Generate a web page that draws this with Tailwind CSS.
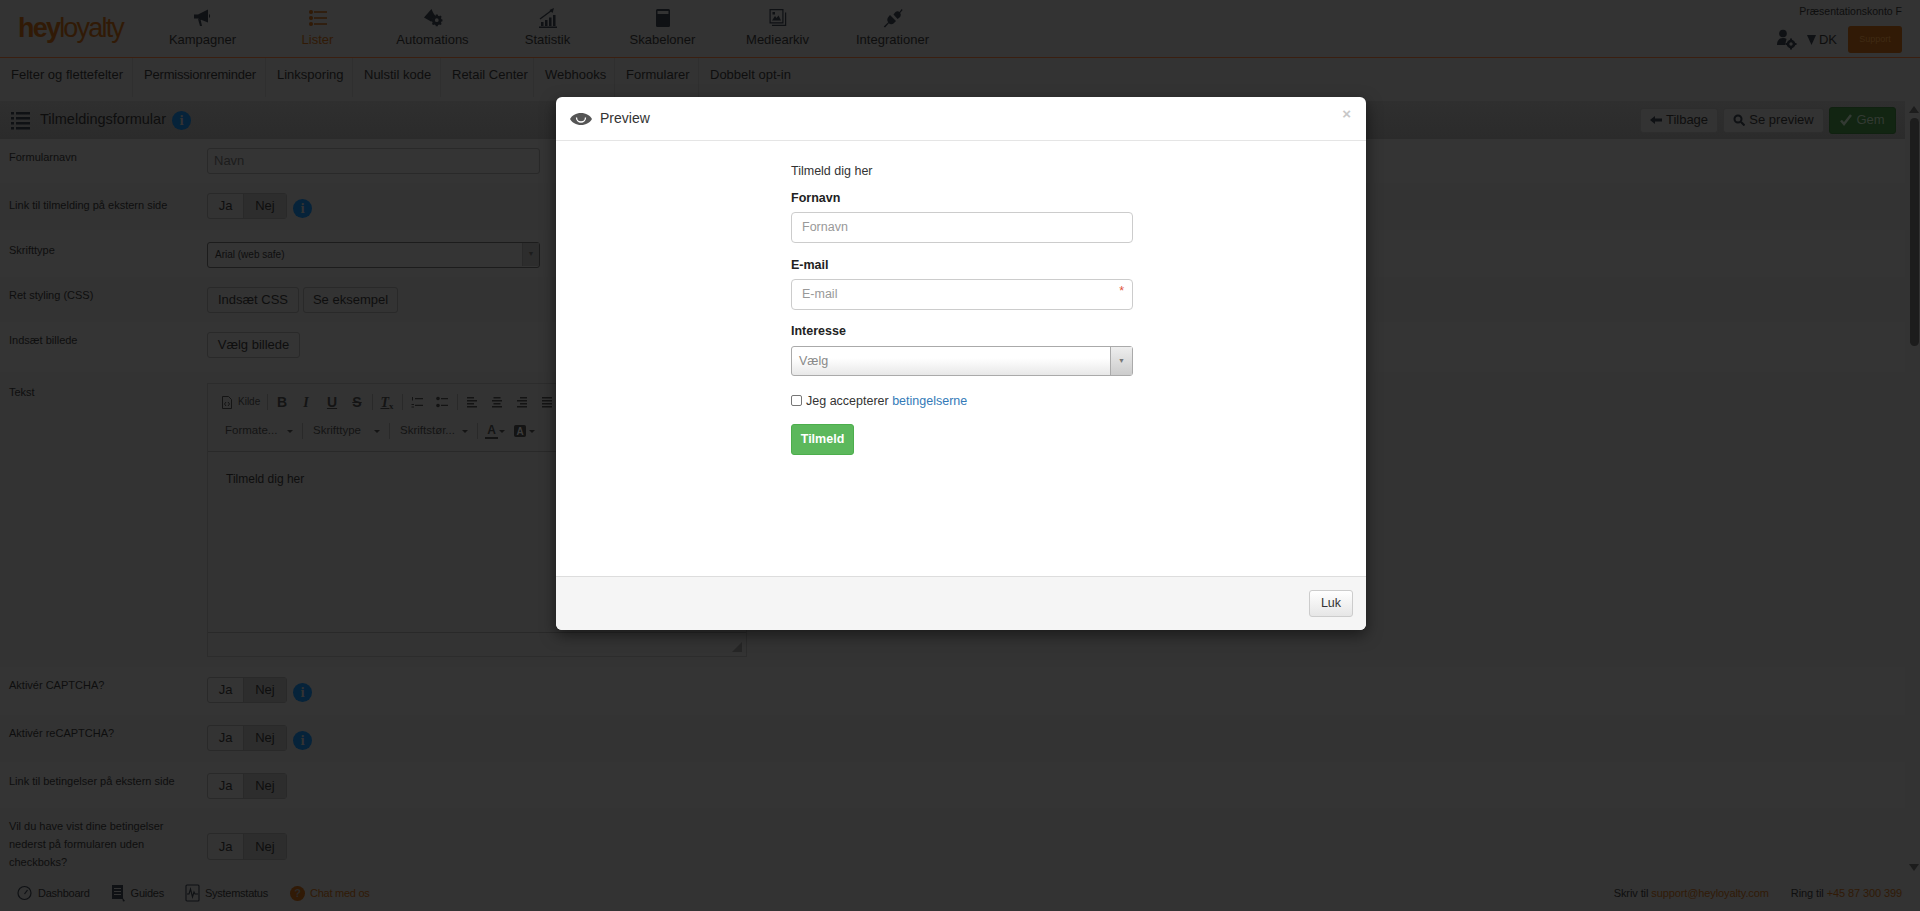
<!DOCTYPE html>
<html>
  <head>
    <title>Tilmeldingsformular</title>
    <script src="https://cdn.jsdelivr.net/npm/@tailwindcss/browser@4"></script>
  </head>
  <body class="h-[911px] overflow-hidden bg-[#333333] font-['Liberation_Sans',Arial,sans-serif] text-[#0e0e0e]">
    <div class="relative flex h-[911px] flex-col">
      <!-- top nav -->
      <header class="flex h-[58px] shrink-0 border-b border-[#3a1f10]">
        <div class="w-[145px] pl-[18px] pt-[13px] text-[27px] leading-[30px] tracking-[-1.8px] text-[#311a06]"><span class="font-bold">hey</span><span>loyalty</span></div>
        <nav class="flex text-[13px]">
          <a class="flex w-[115px] flex-col items-center pt-[8px]">
            <svg class="h-[20px] w-[20px]" viewBox="0 0 20 20" fill="#0f1114"><path d="M1 6.500h4L15 1.500v13L5 10.500H1zM16 6c1.500.5 1.500 3.500 0 4zM5 11l2 7h2L7.500 11.500z"/></svg>
            <span class="mt-[2px] leading-[20px]">Kampagner</span>
          </a>
          <a class="flex w-[115px] flex-col items-center pt-[8px] text-[#311a06]">
            <svg class="h-[20px] w-[20px]" viewBox="0 0 20 20" fill="#311a06"><circle cx="3" cy="4" r="2"/><circle cx="3" cy="10" r="2"/><circle cx="3" cy="16" r="2"/><path d="M6 3.200h13v1.600H6zM6 9.200h13v1.600H6zM6 15.200h13v1.600H6z"/></svg>
            <span class="mt-[2px] leading-[20px]">Lister</span>
          </a>
          <a class="flex w-[115px] flex-col items-center pt-[8px]">
            <svg class="h-[20px] w-[20px]" viewBox="0 0 20 20" fill="#0f1114"><path d="M8.500 1l1.500 3.500 3 4.500-3 1-2 3.500L1 9.500z"/><path fill-rule="evenodd" d="M13.500 10.500h2l.3 1.300 1.300.5 1.200-.7 1.300 1.400-.7 1.100.5 1.300 1.100.4v1.900l-1.100.3-.5 1.300.7 1.100-1.300 1.300-1.200-.6-1.300.5-.3 1.200h-2l-.3-1.200-1.300-.5-1.100.6-1.400-1.300.7-1.100-.5-1.300-1.200-.3v-1.900l1.200-.4.500-1.300-.7-1.100 1.400-1.400 1.100.7 1.300-.5zM14.500 14.500a2 2 0 100 4 2 2 0 000-4z" transform="translate(0 -3.500) scale(.95)"/></svg>
            <span class="mt-[2px] leading-[20px]">Automations</span>
          </a>
          <a class="flex w-[115px] flex-col items-center pt-[8px]">
            <svg class="h-[20px] w-[20px]" viewBox="0 0 20 20" fill="#0f1114"><path d="M1 18.500h18v1.500H1zM3 14h2.500v4H3zM7 12h2.500v6H7zM11 9.500h2.500V18H11zM15 7h2.500v11H15z"/><path d="M2 11L13.500 2.500" stroke="#0f1114" stroke-width="1.300" fill="none"/><path d="M16 0l-1.500 5-3-3z"/></svg>
            <span class="mt-[2px] leading-[20px]">Statistik</span>
          </a>
          <a class="flex w-[115px] flex-col items-center pt-[8px]">
            <svg class="h-[20px] w-[20px]" viewBox="0 0 20 20" fill="#0f1114"><path fill-rule="evenodd" d="M4.500 1h11A1.500 1.500 0 0117 2.500v15a1.500 1.500 0 01-1.500 1.500h-11A1.500 1.500 0 013 17.500v-15A1.500 1.500 0 014.500 1zM4.500 3v3h11V3z"/></svg>
            <span class="mt-[2px] leading-[20px]">Skabeloner</span>
          </a>
          <a class="flex w-[115px] flex-col items-center pt-[8px]">
            <svg class="h-[20px] w-[20px]" viewBox="0 0 20 20" fill="#0f1114"><path fill-rule="evenodd" d="M1.500 1h14v14.500h-14zM2.700 2.200v12h11.600v-12z"/><path d="M4 12.500l3-4.500 1.500 2 2-2.500 2.500 5zM4.500 4h2.500v2.500H4.500zM17 4.500h1.200V18H4v-1.300h13z"/></svg>
            <span class="mt-[2px] leading-[20px]">Mediearkiv</span>
          </a>
          <a class="flex w-[115px] flex-col items-center pt-[8px]">
            <svg class="h-[20px] w-[20px]" viewBox="0 0 20 20" fill="#0f1114"><path d="M7 7l6 6-2.500 2.500c-1.500 1.200-3.500 1-4.700-.2L2 19.500 .8 18.500l4.500-4.200C4 13 4 11 5 9.500zM10.500 6.500l2-2.500c1.500-1 3-.8 4 .1l2.200-3 .9.900-2.500 3c.8 1 1 2.500 0 3.900l-2.500 2.200z"/></svg>
            <span class="mt-[2px] leading-[20px]">Integrationer</span>
          </a>
        </nav>
        <div class="ml-auto flex flex-col items-end pr-[18px] pt-[4px]">
          <span class="text-[10.500px] leading-[14px]">Præsentationskonto F</span>
          <div class="mt-[8px] flex items-center text-[13px]">
            <svg class="h-[21px] w-[21px]" viewBox="0 0 21 21" fill="#0f1114"><circle cx="7" cy="4.500" r="3.800"/><path d="M1 16c0-5 2.500-7 6-7 1.500 0 2.500.3 3.500 1l-1.500 6z"/><circle cx="15" cy="15" r="4.300"/><circle cx="15" cy="15" r="1.700" fill="#333333"/><path d="M14 9.500h2v2h-2zM14 18.500h2v2h-2zM9.500 14h2v2h-2zM18.500 14h2v2h-2z"/></svg>
            <svg class="ml-[10px] h-[10px] w-[9px]" viewBox="0 0 9 10" fill="#0f1114"><path d="M0 0h9L4.500 10z"/></svg>
            <span class="ml-[3px] mr-[11px]">DK</span>
            <span class="flex h-[27px] w-[54px] items-center justify-center rounded-[3px] bg-[#311a06] text-[9px] text-[#3f2a14]">Support</span>
          </div>
        </div>
      </header>

      <!-- sub nav -->
      <nav class="flex h-[43px] shrink-0 items-start text-[13px]">
        <a class="flex h-[39px] w-[133px] items-center border-r border-[#2f2f2f] pb-[5px] pl-[11px]">Felter og flettefelter</a>
        <a class="flex h-[39px] w-[133px] items-center border-r border-[#2f2f2f] pb-[5px] pl-[11px] tracking-[-0.2px]">Permissionreminder</a>
        <a class="flex h-[39px] w-[87px] items-center border-r border-[#2f2f2f] pb-[5px] pl-[11px]">Linksporing</a>
        <a class="flex h-[39px] w-[88px] items-center border-r border-[#2f2f2f] pb-[5px] pl-[11px]">Nulstil kode</a>
        <a class="flex h-[39px] w-[93px] items-center border-r border-[#2f2f2f] pb-[5px] pl-[11px]">Retail Center</a>
        <a class="flex h-[39px] w-[81px] items-center border-r border-[#2f2f2f] pb-[5px] pl-[11px]">Webhooks</a>
        <a class="flex h-[39px] w-[84px] items-center border-r border-[#2f2f2f] pb-[5px] pl-[11px]">Formularer</a>
        <a class="flex h-[39px] items-center pb-[5px] pl-[11px]">Dobbelt opt-in</a>
      </nav>

      <!-- page body + scrollbar -->
      <div class="flex min-h-0 flex-1">
        <main class="min-w-0 flex-1 overflow-hidden">
          <div class="flex h-[38px] items-center bg-gradient-to-b from-[#2f2f2f] to-[#2b2b2b] pl-[11px] pr-[9px]">
            <svg class="h-[19px] w-[19px]" viewBox="0 0 19 19" fill="#0f1114"><path d="M0 1h3v2.500H0zM5 1h14v2.500H5zM0 6h3v2.500H0zM5 6h14v2.500H5zM0 11h3v2.500H0zM5 11h14v2.500H5zM0 16h3v2.500H0zM5 16h14v2.500H5z"/></svg>
            <span class="ml-[10px] text-[14.500px]">Tilmeldingsformular</span>
            <span class="ml-[6px] flex h-[19px] w-[19px] items-center justify-center rounded-full bg-[#06233a] font-['Liberation_Serif',serif] text-[15px] font-bold text-[#333333]">i</span>
            <div class="ml-auto flex items-center gap-[5px] text-[13px]">
              <span class="flex h-[25px] w-[78px] items-center justify-center gap-[4px] rounded-[3px] border border-[#2d2d2d] bg-[#333333]">
                <svg class="h-3 w-3" viewBox="0 0 12 12" fill="#0f1114"><path d="M0 6l5-4v2.500h7v3H5V10z"/></svg>Tilbage</span>
              <span class="flex h-[25px] w-[101px] items-center justify-center gap-[4px] rounded-[3px] border border-[#2d2d2d] bg-[#333333]">
                <svg class="h-3 w-3" viewBox="0 0 12 12" fill="none" stroke="#0f1114" stroke-width="2"><circle cx="5" cy="5" r="3.500"/><path d="M8 8l3.500 3.500"/></svg>Se preview</span>
              <span class="flex h-[27px] w-[67px] items-center justify-center gap-[4px] rounded-[3px] border border-[#102110] bg-[#122512] text-[#333a33]">
                <svg class="h-3 w-3" viewBox="0 0 12 12" fill="none" stroke="#333a33" stroke-width="2.500"><path d="M1 6.500l3 3.500 7-9"/></svg>Gem</span>
            </div>
          </div>

          <form class="text-[11px]">
            <div class="flex h-[44px] bg-[#343434] pt-[9px]">
              <label class="w-[207px] pl-[9px] leading-[18px]">Formularnavn</label>
              <div class="flex h-[26px] w-[333px] items-center rounded-[3px] border border-[#292929] pl-[6px] text-[13px] text-[#1c1c1c]">Navn</div>
            </div>
            <div class="flex h-[47px] pt-[10px]">
              <label class="w-[207px] pl-[9px] pt-[3px] leading-[18px]">Link til tilmelding på ekstern side</label>
              <div class="flex h-[26px] rounded-[3px] border border-[#292929] text-[13px]"><span class="flex w-[36px] items-center justify-center border-r border-[#292929]">Ja</span><span class="flex w-[42px] items-center justify-center bg-[#2d2d2d]">Nej</span></div>
              <span class="ml-[6px] mt-[6px] flex h-[19px] w-[19px] items-center justify-center rounded-full bg-[#06233a] font-['Liberation_Serif',serif] text-[15px] font-bold text-[#333333]">i</span>
            </div>
            <div class="flex h-[47px] bg-[#343434] pt-[12px]">
              <label class="w-[207px] pl-[9px] leading-[16px]">Skrifttype</label>
              <div class="flex h-[26px] w-[333px] items-center rounded-[3px] border border-[#1c1c1c] pb-[1px] pl-[7px] text-[10px]">Arial (web safe)
                <span class="ml-auto flex h-full w-[17px] items-center justify-center border-l border-[#292929] bg-[#2d2d2d] text-[7px] text-[#1c1c1c]">▼</span>
              </div>
            </div>
            <div class="flex h-[45px] pt-[10px]">
              <label class="w-[207px] pl-[9px] leading-[16px]">Ret styling (CSS)</label>
              <div class="flex gap-[4px] text-[13px]">
                <span class="flex h-[26px] w-[92px] items-center justify-center rounded-[3px] border border-[#292929]">Indsæt CSS</span>
                <span class="flex h-[26px] w-[95px] items-center justify-center rounded-[3px] border border-[#292929]">Se eksempel</span>
              </div>
            </div>
            <div class="flex h-[50px] bg-[#343434] pt-[10px]">
              <label class="w-[207px] pl-[9px] leading-[16px]">Indsæt billede</label>
              <span class="flex h-[26px] w-[93px] items-center justify-center rounded-[3px] border border-[#292929] text-[13px]">Vælg billede</span>
            </div>
            <div class="flex h-[295px] pt-[11px]">
              <label class="w-[207px] pl-[9px] pt-[1px] leading-[16px]">Tekst</label>
              <div class="flex h-[274px] w-[540px] flex-col border border-[#2c2c2c]">
                <div class="h-[68px] shrink-0 border-b border-[#292929]">
                  <div class="flex h-[36px] items-center pl-[14px] text-[14px] font-bold text-[#141414]">
                    <svg class="h-[13px] w-[10px]" viewBox="0 0 10 13" fill="none" stroke="#141414"><path d="M.5.500h6l3 3v9H.5z"/><path d="M4 6L2.500 8 4 10M6 6l1.500 2L6 10"/></svg>
                    <span class="ml-[6px] w-[29px] pb-[2px] text-[10px] font-normal">Kilde</span>
                    <span class="h-[16px] w-px bg-[#292929]"></span>
                    <span class="w-[28px] text-center">B</span>
                    <span class="w-[20px] text-center font-['Liberation_Serif',serif] italic">I</span>
                    <span class="w-[32px] text-center underline">U</span>
                    <span class="w-[18px] text-center line-through">S</span>
                    <span class="ml-[6px] h-[16px] w-px bg-[#292929]"></span>
                    <span class="w-[28px] text-center font-['Liberation_Serif',serif] italic underline">T<sub class="text-[9px] not-italic">x</sub></span>
                    <span class="ml-[1px] h-[16px] w-px bg-[#292929]"></span>
                    <span class="flex w-[28px] justify-center"><svg class="h-[12px] w-[12px]" viewBox="0 0 12 12" fill="#141414"><path d="M1 1h1v3.500H1zM.5 8h2.500v1H.5zM.5 10.500h2.500v1H.5zM4 2h8v1.300H4zM4 8.700h8V10H4z"/></svg></span>
                    <span class="flex w-[22px] justify-center"><svg class="h-[12px] w-[12px]" viewBox="0 0 12 12" fill="#141414"><circle cx="2" cy="2.500" r="1.800"/><circle cx="2" cy="9.500" r="1.800"/><path d="M5 2h7v1.300H5zM5 8.700h7V10H5z"/></svg></span>
                    <span class="ml-[4px] h-[16px] w-px bg-[#292929]"></span>
                    <span class="flex w-[28px] justify-center"><svg class="h-[12px] w-[12px]" viewBox="0 0 12 12" fill="#141414"><path d="M1 1h7v1.500H1zM1 4h10v1.500H1zM1 7h7v1.500H1zM1 10h10v1.500H1z"/></svg></span>
                    <span class="flex w-[22px] justify-center"><svg class="h-[12px] w-[12px]" viewBox="0 0 12 12" fill="#141414"><path d="M2.500 1h7v1.500h-7zM1 4h10v1.500H1zM2.500 7h7v1.500h-7zM1 10h10v1.500H1z"/></svg></span>
                    <span class="flex w-[28px] justify-center"><svg class="h-[12px] w-[12px]" viewBox="0 0 12 12" fill="#141414"><path d="M4 1h7v1.500H4zM1 4h10v1.500H1zM4 7h7v1.500H4zM1 10h10v1.500H1z"/></svg></span>
                    <span class="flex w-[22px] justify-center"><svg class="h-[12px] w-[12px]" viewBox="0 0 12 12" fill="#141414"><path d="M1 1h10v1.500H1zM1 4h10v1.500H1zM1 7h10v1.500H1zM1 10h10v1.500H1z"/></svg></span>
                  </div>
                  <div class="flex h-[22px] items-center pl-[17px] text-[11.500px] text-[#141414]">
                    <span class="w-[58px]">Formate...</span><span class="flex w-[14px] justify-center"><i class="border-x-[3px] border-t-[3px] border-x-transparent border-t-[#141414]"></i></span>
                    <span class="ml-[5px] h-[16px] w-px bg-[#292929]"></span>
                    <span class="ml-[10px] w-[57px]">Skrifttype</span><span class="flex w-[14px] justify-center"><i class="border-x-[3px] border-t-[3px] border-x-transparent border-t-[#141414]"></i></span>
                    <span class="ml-[5px] h-[16px] w-px bg-[#292929]"></span>
                    <span class="ml-[10px] w-[58px]">Skriftstør...</span><span class="flex w-[14px] justify-center"><i class="border-x-[3px] border-t-[3px] border-x-transparent border-t-[#141414]"></i></span>
                    <span class="ml-[5px] h-[16px] w-px bg-[#292929]"></span>
                    <span class="ml-[7px] w-[13px] border-b-2 border-[#141414] text-center text-[12px] font-bold leading-[13px]">A</span><span class="flex w-[8px] justify-center"><i class="border-x-[3px] border-t-[3px] border-x-transparent border-t-[#141414]"></i></span>
                    <span class="ml-[8px] flex h-[12px] w-[12px] items-center justify-center rounded-[2px] bg-[#141414] text-[10px] font-bold text-[#3c3c3c]">A</span><span class="ml-[2px] flex w-[8px] justify-center"><i class="border-x-[3px] border-t-[3px] border-x-transparent border-t-[#141414]"></i></span>
                  </div>
                </div>
                <div class="h-[180px] shrink-0 pl-[18px] pt-[18px] text-[12px] leading-[18px]">Tilmeld dig her</div>
                <div class="relative flex-1 border-t border-[#292929]">
                  <svg class="absolute bottom-[4px] right-[4px] h-[10px] w-[10px]" viewBox="0 0 10 10" fill="#262626"><path d="M10 0v10H0z"/></svg>
                </div>
              </div>
            </div>
            <div class="flex h-[48px] bg-[#343434] pt-[10px]">
              <label class="w-[207px] pl-[9px] leading-[16px]">Aktivér CAPTCHA?</label>
              <div class="flex h-[26px] rounded-[3px] border border-[#292929] text-[13px]"><span class="flex w-[36px] items-center justify-center border-r border-[#292929]">Ja</span><span class="flex w-[42px] items-center justify-center bg-[#2d2d2d]">Nej</span></div>
              <span class="ml-[6px] mt-[6px] flex h-[19px] w-[19px] items-center justify-center rounded-full bg-[#06233a] font-['Liberation_Serif',serif] text-[15px] font-bold text-[#333333]">i</span>
            </div>
            <div class="flex h-[47px] pt-[10px]">
              <label class="w-[207px] pl-[9px] leading-[16px]">Aktivér reCAPTCHA?</label>
              <div class="flex h-[26px] rounded-[3px] border border-[#292929] text-[13px]"><span class="flex w-[36px] items-center justify-center border-r border-[#292929]">Ja</span><span class="flex w-[42px] items-center justify-center bg-[#2d2d2d]">Nej</span></div>
              <span class="ml-[6px] mt-[6px] flex h-[19px] w-[19px] items-center justify-center rounded-full bg-[#06233a] font-['Liberation_Serif',serif] text-[15px] font-bold text-[#333333]">i</span>
            </div>
            <div class="flex h-[46px] bg-[#343434] pt-[11px]">
              <label class="w-[207px] pl-[9px] leading-[16px]">Link til betingelser på ekstern side</label>
              <div class="flex h-[26px] rounded-[3px] border border-[#292929] text-[13px]"><span class="flex w-[36px] items-center justify-center border-r border-[#292929]">Ja</span><span class="flex w-[42px] items-center justify-center bg-[#2d2d2d]">Nej</span></div>
            </div>
            <div class="flex h-[66px] pt-[9px]">
              <label class="w-[207px] pl-[9px] pr-[39px] leading-[18px]">Vil du have vist dine betingelser nederst på formularen uden checkboks?</label>
              <div class="mt-[16px] flex h-[27px] rounded-[3px] border border-[#292929] text-[13px]"><span class="flex w-[36px] items-center justify-center border-r border-[#292929]">Ja</span><span class="flex w-[42px] items-center justify-center bg-[#2d2d2d]">Nej</span></div>
            </div>
          </form>
        </main>
        <!-- scrollbar -->
        <div class="flex w-[15px] shrink-0 flex-col items-center pl-[3px] pt-[5px]">
          <svg class="h-[7px] w-[10px]" viewBox="0 0 10 7" fill="#1c1c1c"><path d="M5 0l5 7H0z"/></svg>
          <span class="mt-[5px] h-[228px] w-[9px] rounded-full bg-[#1c1c1c]"></span>
          <svg class="mb-[4px] mt-auto h-[7px] w-[10px]" viewBox="0 0 10 7" fill="#1c1c1c"><path d="M0 0h10L5 7z"/></svg>
        </div>
      </div>

      <!-- footer -->
      <footer class="flex h-[36px] shrink-0 items-center pl-[17px] pr-[18px] text-[11px] tracking-[-0.25px]">
        <svg class="h-[18px] w-[15px]" viewBox="0 0 15 18" fill="none" stroke="#0f1114" stroke-width="1.200"><circle cx="7.500" cy="9" r="6.500"/><path d="M7.500 10l3-4"/></svg>
        <span class="ml-[6px]">Dashboard</span>
        <svg class="ml-[21px] h-[18px] w-[15px]" viewBox="0 0 15 18" fill="#0f1114"><path fill-rule="evenodd" d="M1 1h11v14H1zM3 4v1h7V4zM3 7v1h7V7zM3 10v1h7v-1z"/><path d="M11 13l3 4-2 .5z"/></svg>
        <span class="ml-[5px]">Guides</span>
        <svg class="ml-[21px] h-[18px] w-[15px]" viewBox="0 0 15 18" fill="none" stroke="#0f1114" stroke-width="1.100"><rect x="1" y="1" width="13" height="16" rx="1"/><path d="M2 10h2l1.500-5 2 8 1.500-5 1 2h3"/></svg>
        <span class="ml-[5px]">Systemstatus</span>
        <span class="ml-[22px] flex h-[15px] w-[15px] items-center justify-center rounded-full bg-[#311a06] text-[11px] font-bold text-[#2b2b2b]">?</span>
        <span class="ml-[5px] text-[#311a06]">Chat med os</span>
        <span class="ml-auto tracking-[-0.1px]">Skriv til <a class="text-[#311a06]">support@heyloyalty.com</a></span>
        <span class="ml-[22px] tracking-[-0.1px]">Ring til <a class="text-[#311a06]">+45 87 300 399</a></span>
      </footer>

      <!-- preview modal -->
      <div class="absolute left-[556px] top-[97px] flex h-[533px] w-[810px] flex-col rounded-[6px] bg-white text-[#333333] shadow-[0_5px_15px_rgba(0,0,0,0.5)]">
        <div class="flex h-[44px] shrink-0 items-center border-b border-[#e5e5e5] pl-[14px] pr-[15px]">
          <svg class="h-[16px] w-[22px]" viewBox="0 0 22 16" fill="#555555"><path d="M11 2c5 0 9 2.500 11 6-2 3.500-6 6-11 6S2 11.500 0 8c2-3.500 6-6 11-6z"/><path d="M6.500 6.500a4.500 4.500 0 009 0" fill="none" stroke="white" stroke-width="1.300"/></svg>
          <span class="ml-[8px] text-[14px]">Preview</span>
          <span class="ml-auto mb-[8px] text-[15px] font-bold text-[#c8c8c8]">×</span>
        </div>
        <div class="flex-1 pl-[235px] pt-[22px]">
          <form class="w-[342px] text-[12.500px]">
            <p class="leading-[17px]">Tilmeld dig her</p>
            <label class="mt-[10px] block text-[12.500px] font-bold leading-[17px] text-[#222222]">Fornavn</label>
            <div class="mt-[5px] flex h-[31px] items-center rounded-[4px] border border-[#cccccc] pl-[10px] text-[#999999]">Fornavn</div>
            <label class="mt-[14px] block text-[12.500px] font-bold leading-[17px] text-[#222222]">E-mail</label>
            <div class="relative mt-[5px] flex h-[31px] items-center rounded-[4px] border border-[#cccccc] pl-[10px] text-[#999999]">E-mail
              <span class="absolute right-[8px] top-[2px] text-[#e0533a]">*</span>
            </div>
            <label class="mt-[13px] block text-[12.500px] font-bold leading-[17px] text-[#222222]">Interesse</label>
            <div class="mt-[6px] flex h-[30px] items-center rounded-[3px] border border-[#aaaaaa] bg-gradient-to-b from-white from-40% to-[#e8e8e8] pl-[7px] text-[#888888]">Vælg
              <span class="ml-auto flex h-full w-[22px] items-center justify-center border-l border-[#aaaaaa] bg-gradient-to-b from-[#eeeeee] to-[#cccccc] text-[7px] text-[#777777]">▼</span>
            </div>
            <div class="mt-[17px] flex items-center">
              <span class="mb-[2px] h-[11px] w-[11px] rounded-[2px] border border-[#767676]"></span>
              <span class="ml-[4px] leading-[16px]">Jeg accepterer <a class="text-[#337ab7]">betingelserne</a></span>
            </div>
            <button type="button" class="mt-[15px] h-[31px] w-[63px] rounded-[3px] border border-[#4cae4c] bg-[#5cb85c] text-[12.500px] font-bold text-white">Tilmeld</button>
          </form>
        </div>
        <div class="flex h-[54px] shrink-0 items-center justify-end rounded-b-[6px] border-t border-[#dddddd] bg-[#f5f5f5] pr-[13px]">
          <button type="button" class="h-[27px] w-[44px] rounded-[3px] border border-[#cccccc] bg-gradient-to-b from-white to-[#e6e6e6] text-[12.500px] text-[#333333]">Luk</button>
        </div>
      </div>
    </div>
  </body>
</html>
